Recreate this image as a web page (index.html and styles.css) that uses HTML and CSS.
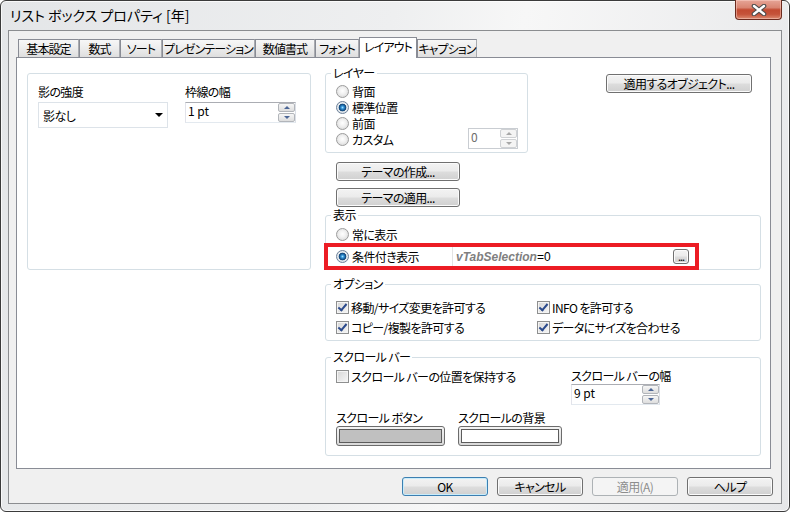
FILE: index.html
```html
<!DOCTYPE html>
<html lang="ja">
<head>
    <meta charset="UTF-8">
    <meta name="viewport" content="width=device-width, initial-scale=1.0">
    <title>リスト ボックス プロパティ [年]</title>
    <link rel="stylesheet" href="styles.css">
</head>
<body>
    <div class="window">
        <!-- タイトルバー -->
        <div class="titlebar">
            <span class="title">リスト ボックス プロパティ [年]</span>
            <div class="close-btn">
                <svg width="16" height="12" viewBox="0 0 16 12">
                    <path d="M3 2 L13 10 M13 2 L3 10" stroke="#4b4b4b" stroke-width="4.6" stroke-linecap="round"/>
                    <path d="M3 2 L13 10 M13 2 L3 10" stroke="#ffffff" stroke-width="2.4" stroke-linecap="round"/>
                </svg>
            </div>
        </div>

        <div class="client">
            <!-- タブ -->
            <div class="tabs">
                <div class="tab">基本設定</div>
                <div class="tab">数式</div>
                <div class="tab">ソート</div>
                <div class="tab">プレゼンテーション</div>
                <div class="tab">数値書式</div>
                <div class="tab">フォント</div>
                <div class="tab active">レイアウト</div>
                <div class="tab">キャプション</div>
            </div>

            <div class="panel">
                <!-- 影と枠線 -->
                <div class="shadow-group">
                    <div class="field field-shadow">
                        <div class="field-label">影の強度</div>
                        <div class="combo">
                            <span>影なし</span>
                            <i class="combo-arrow"></i>
                        </div>
                    </div>
                    <div class="field field-border">
                        <div class="field-label">枠線の幅</div>
                        <div class="spin">
                            <span class="spin-value">1 pt</span>
                            <div class="spin-btns"><b class="up"></b><b class="down"></b></div>
                        </div>
                    </div>
                </div>

                <div class="right-col">
                    <div class="row-top">
                        <fieldset class="group layer-group">
                            <legend>レイヤー</legend>
                            <div class="opt"><span class="radio"></span>背面</div>
                            <div class="opt"><span class="radio checked"></span>標準位置</div>
                            <div class="opt"><span class="radio"></span>前面</div>
                            <div class="opt">
                                <span class="radio"></span>カスタム
                                <div class="spin spin-layer disabled">
                                    <span class="spin-value">0</span>
                                    <div class="spin-btns"><b class="up"></b><b class="down"></b></div>
                                </div>
                            </div>
                        </fieldset>
                        <button class="btn btn-objects">適用するオブジェクト...</button>
                    </div>

                    <button class="btn btn-theme">テーマの作成...</button>
                    <button class="btn btn-theme btn-theme-apply">テーマの適用...</button>

                    <!-- 表示 -->
                    <fieldset class="group show-group">
                        <legend>表示</legend>
                        <div class="opt show-always"><span class="radio"></span>常に表示</div>
                        <div class="show-cond">
                            <div class="cond-label"><span class="radio checked"></span>条件付き表示</div>
                            <div class="expr">
                                <span class="expr-var">vTabSelection</span>=0
                                <button class="btn btn-dots">...</button>
                            </div>
                        </div>
                    </fieldset>

                    <!-- オプション -->
                    <fieldset class="group option-group">
                        <legend>オプション</legend>
                        <div class="option-grid">
                            <div class="opt"><span class="check checked"></span>移動/サイズ変更を許可する</div>
                            <div class="opt"><span class="check checked"></span>INFO を許可する</div>
                            <div class="opt"><span class="check checked"></span>コピー/複製を許可する</div>
                            <div class="opt"><span class="check checked"></span>データにサイズを合わせる</div>
                        </div>
                    </fieldset>

                    <!-- スクロール バー -->
                    <fieldset class="group scroll-group">
                        <legend>スクロール バー</legend>
                        <div class="sb-top">
                            <div class="opt sb-keep"><span class="check"></span>スクロール バーの位置を保持する</div>
                            <div class="sb-width">
                                <div class="sb-label">スクロール バーの幅</div>
                                <div class="spin spin-sb">
                                    <span class="spin-value">9 pt</span>
                                    <div class="spin-btns"><b class="up"></b><b class="down"></b></div>
                                </div>
                            </div>
                        </div>
                        <div class="sb-bottom">
                            <div class="swatch-field swatch-btn">
                                <div class="sb-label">スクロール ボタン</div>
                                <div class="swatch"><div class="swatch-fill gray"></div></div>
                            </div>
                            <div class="swatch-field swatch-bg">
                                <div class="sb-label">スクロールの背景</div>
                                <div class="swatch"><div class="swatch-fill white"></div></div>
                            </div>
                        </div>
                    </fieldset>
                </div>
            </div>

            <!-- ボタン -->
            <div class="footer">
                <button class="btn btn-footer default">OK</button>
                <button class="btn btn-footer">キャンセル</button>
                <button class="btn btn-footer" disabled>適用(A)</button>
                <button class="btn btn-footer">ヘルプ</button>
            </div>
        </div>
    </div>
</body>
</html>
```

FILE: styles.css
```css
:root {
    --ui-font: "Noto Sans CJK JP", "Noto Sans", sans-serif;
    --group-border: #d5dfe5;
    --tab-border: #898c95;
}

* { box-sizing: border-box; }

body {
    margin: 0;
    background: #ffffff;
    font-family: var(--ui-font);
    font-size: 12px;
    font-feature-settings: "palt";
    letter-spacing: -0.6px;
    color: #000;
}

.window {
    width: 790px;
    height: 512px;
    display: flex;
    flex-direction: column;
    padding: 0 7px 7px 7px;
    border: 1px solid #3b3b3b;
    border-radius: 6px;
    background: linear-gradient(100deg, #e4e6e8 0%, #eeeff0 45%, #f7f7f7 60%, #e6e7e9 100%);
    box-shadow: inset 0 0 0 1px rgba(255,255,255,0.75);
}

/* タイトルバー */
.titlebar {
    height: 29px;
    display: flex;
    justify-content: space-between;
    align-items: flex-start;
}

.title {
    padding-left: 2px;
    font-size: 14px;
    line-height: 29px;
    letter-spacing: 0;
    color: #000;
}

.close-btn {
    width: 47px;
    height: 20px;
    margin-top: -1px;
    display: flex;
    align-items: center;
    justify-content: center;
    border: 1px solid #6b2a1e;
    border-top: none;
    border-radius: 0 0 4px 4px;
    background: linear-gradient(#e6a597 0%, #d98572 40%, #c24a31 52%, #c5533a 75%, #dc8a70 100%);
    box-shadow: inset 0 0 0 1px rgba(255,220,210,0.45);
}

.client {
    flex: 1;
    display: flex;
    flex-direction: column;
    padding: 6px 10px 0 7px;
    border: 1px solid #8b8d90;
    background: #f0f0f0;
}

/* タブ */
.tabs {
    height: 20px;
    display: flex;
    align-items: flex-end;
    padding-left: 2px;
}

.tab {
    height: 18px;
    display: flex;
    align-items: center;
    justify-content: center;
    border: 1px solid var(--tab-border);
    border-bottom: none;
    border-right-color: #a9abb0;
    background: linear-gradient(#f7f7f7 0%, #ececec 50%, #dedede 100%);
    white-space: nowrap;
    line-height: 14px;
    letter-spacing: -0.9px;
}

.tab:nth-child(1) { width: 61px; }
.tab:nth-child(2) { width: 41px; }
.tab:nth-child(3) { width: 42px; }
.tab:nth-child(4) { width: 93px; }
.tab:nth-child(5) { width: 60px; }
.tab:nth-child(6) { width: 44px; }
.tab:nth-child(7) { width: 58px; }
.tab:nth-child(8) { width: 60px; }

.tab.active {
    height: 21px;
    margin-bottom: -1px;
    position: relative;
    z-index: 1;
    background: #ffffff;
    border-color: var(--tab-border);
    padding-bottom: 3px;
}

.panel {
    flex: 1;
    display: grid;
    grid-template-columns: 284px 436px;
    column-gap: 14px;
    align-items: start;
    padding: 8px 0 0 10px;
    background: #ffffff;
    border: 1px solid var(--tab-border);
}

/* 共通部品 */
.group {
    margin: 0;
    padding: 0;
    min-width: 0;
    border: 1px solid var(--group-border);
    border-radius: 3px;
}

.group legend {
    margin-left: 5px;
    padding: 0 2px;
    line-height: 14px;
}

.layer-group legend,
.option-group legend,
.scroll-group legend {
    margin-left: -5px;
}

.opt {
    height: 16px;
    display: flex;
    align-items: center;
    white-space: nowrap;
}

.radio {
    width: 13px;
    height: 13px;
    flex: none;
    margin-right: 3px;
    border-radius: 50%;
    border: 1px solid #9c9c9c;
    background: radial-gradient(circle at 50% 45%, #ffffff 0%, #f1f1f1 40%, #d2d2d2 100%);
}

.radio.checked {
    border-color: #6e8199;
    background:
        radial-gradient(circle at 50% 50%, #9fe0ff 0, #2f8fd4 1.5px, #0d3f72 3.5px, rgba(13,63,114,0) 4.2px),
        radial-gradient(circle at 50% 45%, #ffffff 0%, #eef2f5 40%, #ccd4dc 100%);
}

.check {
    width: 13px;
    height: 13px;
    flex: none;
    margin-right: 2px;
    border: 1px solid #8e8f8f;
    background: linear-gradient(135deg, #d6d6d6 0%, #f6f6f6 100%);
    box-shadow: inset 0 0 0 1px #f4f4f4;
    position: relative;
}

.check.checked::after {
    content: "";
    position: absolute;
    left: 3px;
    top: 0px;
    width: 3px;
    height: 7px;
    border: solid #2b4a8c;
    border-width: 0 2px 2px 0;
    transform: rotate(40deg);
}

.btn {
    font-family: var(--ui-font);
    font-size: 12px;
    font-feature-settings: "palt";
    letter-spacing: -0.6px;
    height: 19px;
    padding: 0;
    color: #000;
    line-height: 15px;
    border: 1px solid #707070;
    border-radius: 3px;
    background: linear-gradient(#f3f3f3 0%, #ebebeb 48%, #dddddd 52%, #d0d0d0 100%);
    box-shadow: inset 0 0 0 1px #fbfbfb;
}

.btn.default {
    border-color: #3c7fb1;
    box-shadow: inset 0 0 0 1px #c8ecfb;
}

.btn:disabled {
    color: #8d8d8d;
    border-color: #adb2b5;
    background: #f4f4f4;
    box-shadow: none;
}

/* スピン */
.spin {
    height: 21px;
    display: flex;
    justify-content: space-between;
    background: #ffffff;
    border: 1px solid;
    border-color: #abadb3 #dbdfe6 #e3e9ef #e2e3ea;
}

.spin-value {
    padding: 1px 0 0 2px;
    line-height: 14px;
    letter-spacing: 0;
}

.spin-btns {
    width: 17px;
    display: flex;
    flex-direction: column;
    gap: 1px;
}

.spin-btns b {
    flex: 1;
    display: flex;
    align-items: center;
    justify-content: center;
    border: 1px solid #b2b5ba;
    border-radius: 2px;
    background: linear-gradient(#f6f6f6, #dedede);
}

.spin-btns b::after {
    content: "";
    border-left: 3px solid transparent;
    border-right: 3px solid transparent;
}

.spin-btns .up::after { border-bottom: 3px solid #4c6696; }
.spin-btns .down::after { border-top: 3px solid #4c6696; }

.spin.disabled {
    border-color: #c9cdd2;
    color: #6d6d6d;
}

.spin.disabled .spin-btns b {
    border-color: #cfd1d4;
    background: #f4f4f4;
}

.spin.disabled .spin-btns .up::after { border-bottom-color: #a7a7a7; }
.spin.disabled .spin-btns .down::after { border-top-color: #a7a7a7; }

/* 左のグループ */
.shadow-group {
    margin-top: 7px;
    height: 197px;
    display: flex;
    gap: 17px;
    padding: 11px 0 0 10px;
    border: 1px solid var(--group-border);
    border-radius: 3px;
}

.field-label {
    line-height: 14px;
    margin-bottom: 3px;
}

.field-shadow { width: 130px; }
.field-border { width: 111px; }

.combo {
    height: 26px;
    display: flex;
    align-items: center;
    justify-content: space-between;
    padding: 0 4px 0 4px;
    border: 1px solid #dde3e9;
    background: #fff;
}

.combo-arrow {
    border-left: 4px solid transparent;
    border-right: 4px solid transparent;
    border-top: 4px solid #000;
}

/* 右の列 */
.right-col {
    display: flex;
    flex-direction: column;
    align-items: flex-start;
}

.row-top {
    width: 100%;
    display: flex;
    justify-content: space-between;
    align-items: flex-start;
}

.layer-group {
    width: 203px;
    padding: 3px 9px 5px 10px;
}

.spin-layer {
    width: 50px;
    margin-left: auto;
    margin-top: -2px;
}

.btn-objects {
    width: 146px;
    margin: 8px 9px 0 0;
}

.btn-theme {
    width: 124px;
    margin: 9px 0 0 11px;
}

.btn-theme-apply { margin-top: 7px; }

.show-group {
    width: 100%;
    margin-top: 1px;
}

.show-always {
    margin-top: 4px;
    padding-left: 10px;
}

.show-cond {
    width: 375px;
    height: 27px;
    margin: 1px 0 -1px -2px;
    display: flex;
    align-items: stretch;
    border: 4px solid #ec1c24;
}

.cond-label {
    width: 124px;
    display: flex;
    align-items: center;
    padding-left: 8px;
    white-space: nowrap;
}

.expr {
    flex: 1;
    display: flex;
    align-items: center;
    padding-left: 3px;
    background: #fff;
    border-left: 1px solid #e3e3e3;
    font-family: "Liberation Sans", var(--ui-font);
    font-size: 12px;
    letter-spacing: 0;
}

.expr-var {
    font-weight: bold;
    font-style: italic;
    color: #7f7f7f;
}

.btn-dots {
    width: 16px;
    height: 15px;
    margin: 0 6px 0 auto;
    line-height: 9px;
    font-size: 11px;
    letter-spacing: -1px;
}

.option-group {
    width: 100%;
    margin-top: 7px;
    padding: 8px 0 5px 10px;
}

.option-grid {
    display: grid;
    grid-template-columns: 201px 201px;
    row-gap: 4px;
}

.scroll-group {
    width: 100%;
    margin-top: 9px;
    padding: 4px 0 9px 10px;
}

.sb-top {
    display: flex;
}

.sb-keep { width: 235px; }

.sb-label {
    line-height: 16px;
    white-space: nowrap;
}

.sb-width { width: 89px; }

.sb-bottom {
    display: flex;
    gap: 13px;
    margin-top: 5px;
}

.swatch-btn { width: 109px; }
.swatch-bg { width: 104px; }

.swatch {
    height: 20px;
    padding: 2px;
    border: 1px solid #6c6c6c;
    border-radius: 3px;
    background: linear-gradient(#f4f4f4, #d9d9d9);
}

.swatch-fill {
    height: 100%;
    border: 1px solid #5c5c5c;
}

.swatch-fill.gray { background: #c0c0c0; }
.swatch-fill.white { background: #ffffff; }

/* 下のボタン */
.footer {
    height: 19px;
    display: flex;
    justify-content: flex-end;
    gap: 9px;
    margin: 8px -2px 7px 0;
}

.btn-footer { width: 86px; }
```
